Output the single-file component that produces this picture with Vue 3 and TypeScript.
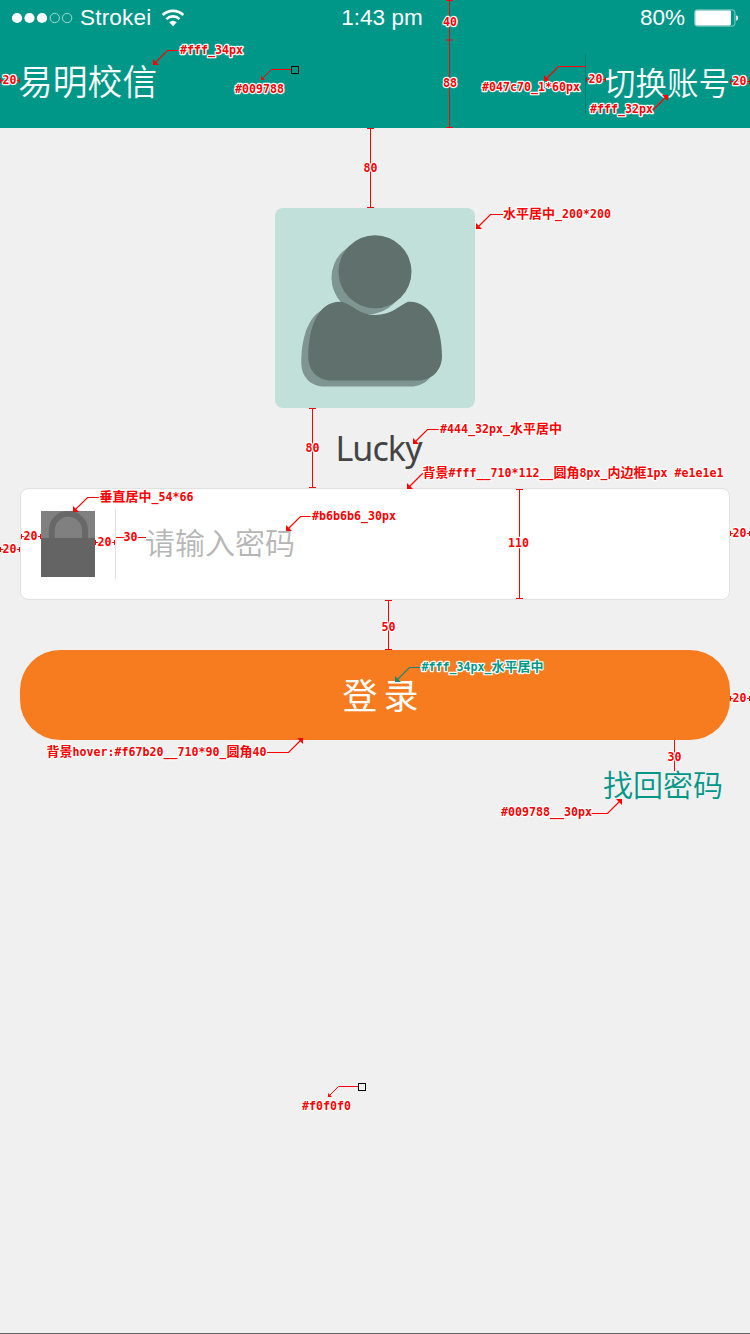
<script setup lang="ts">
interface Note {
  x: number
  y: number
  text: string
  teal?: boolean
}
interface Leader {
  points: string
  tip: [number, number]
  dir: 'down' | 'up'
  size?: number
  teal?: boolean
}

const notes: Note[] = [
  { x: 180, y: 54, text: '#fff_34px' },
  { x: 235, y: 93, text: '#009788' },
  { x: 443, y: 26, text: '40' },
  { x: 443, y: 87, text: '88' },
  { x: 482, y: 91, text: '#047c70_1*60px' },
  { x: 590, y: 113, text: '#fff_32px' },
  { x: 2.5, y: 84, text: '20' },
  { x: 588.5, y: 83, text: '20' },
  { x: 732.5, y: 85, text: '20' },
  { x: 363.5, y: 172, text: '80' },
  { x: 503, y: 218, text: '水平居中_200*200' },
  { x: 305.5, y: 452, text: '80' },
  { x: 440, y: 433, text: '#444_32px_水平居中' },
  { x: 422.5, y: 477, text: '背景#fff__710*112__圆角8px_内边框1px #e1e1e1' },
  { x: 99.5, y: 501, text: '垂直居中_54*66' },
  { x: 312, y: 520, text: '#b6b6b6_30px' },
  { x: 23.5, y: 540, text: '20' },
  { x: 2.5, y: 553, text: '20' },
  { x: 97.5, y: 546, text: '20' },
  { x: 123.5, y: 541, text: '30' },
  { x: 508, y: 547, text: '110' },
  { x: 732.5, y: 537, text: '20' },
  { x: 381.5, y: 631, text: '50' },
  { x: 421.5, y: 671, text: '#fff_34px_水平居中', teal: true },
  { x: 46.5, y: 756, text: '背景hover:#f67b20__710*90_圆角40' },
  { x: 732.5, y: 702, text: '20' },
  { x: 667.5, y: 761, text: '30' },
  { x: 501, y: 816, text: '#009788__30px' },
  { x: 302, y: 1110, text: '#f0f0f0' },
]

const leaders: Leader[] = [
  { points: '180,50.5 167.5,50.5 155,63', tip: [153, 65], dir: 'down' },
  { points: '291,69.5 271.5,69.5 263,78', tip: [261, 80], dir: 'down', size: 4 },
  { points: '586,66.5 558.5,66.5 546,79', tip: [544, 81], dir: 'down' },
  { points: '653,110 666,97', tip: [668, 95], dir: 'up' },
  { points: '503,214.5 490.5,214.5 478,227', tip: [476, 229], dir: 'down' },
  { points: '440,429.5 427.5,429.5 415,442', tip: [413, 444], dir: 'down' },
  { points: '423,473.5 421.5,474.5 409,487', tip: [407, 489], dir: 'down' },
  { points: '100,497.5 87.5,497.5 75,510', tip: [73, 512], dir: 'down' },
  { points: '312,516.5 300.5,516.5 288,529', tip: [286, 531], dir: 'down' },
  { points: '421,667.5 409.5,667.5 397,680', tip: [395, 682], dir: 'down', teal: true },
  { points: '267,752.5 288.5,752.5 301,740', tip: [303, 738], dir: 'up' },
  { points: '591,813.5 607.5,813.5 620,801', tip: [622, 799], dir: 'up' },
  { points: '358,1086.5 338.5,1086.5 330,1095', tip: [328, 1097], dir: 'down', size: 4 },
]

// Vertical dimension lines, with a tick at each listed height.
const rulers = [
  { x: 449.5, ticks: [0.5, 40, 127.5] },
  { x: 370.5, ticks: [128.5, 207.5] },
  { x: 312.5, ticks: [408.5, 487.5] },
  { x: 519.5, ticks: [489.5, 598.5] },
  { x: 388.5, ticks: [600.5, 649.5] },
]

// Horizontal gaps: left edge, right edge, height.
const gaps = [
  [0, 20, 80],
  [586, 606, 79],
  [730, 750, 81],
  [21, 41, 536],
  [0, 20, 549],
  [95, 115, 542],
  [730, 750, 533],
  [730, 750, 698],
]

const runs = (text: string) =>
  text.match(/[\u4e00-\u9fff]+|[^\u4e00-\u9fff]+/g)!.map((value) => ({
    value,
    han: /[\u4e00-\u9fff]/.test(value),
  }))

const arrow = ({ tip: [x, y], dir, size = 6 }: Leader) =>
  dir === 'down'
    ? `${x},${y} ${x},${y - size} ${x + size},${y}`
    : `${x},${y} ${x - size},${y} ${x},${y + size}`
</script>

<template>
  <div class="screen">
    <header class="header">
      <div class="status">
        <div class="carrier">
          <svg class="dots" width="62" height="12" viewBox="0 0 62 12">
            <circle cx="6" cy="6" r="5.1" fill="#fff" />
            <circle cx="18.5" cy="6" r="5.1" fill="#fff" />
            <circle cx="31" cy="6" r="5.1" fill="#fff" />
            <circle cx="43.8" cy="6" r="4.7" fill="none" stroke="#b5ded9" stroke-width=".9" />
            <circle cx="56.1" cy="6" r="4.7" fill="none" stroke="#b5ded9" stroke-width=".9" />
          </svg>
          <span class="carrier-name">Strokei</span>
          <svg width="24" height="18" viewBox="0 0 24 18" fill="none" stroke="#fff">
            <path d="M1.7 6.1A14.8 14.8 0 0 1 22.3 6.1" stroke-width="2.8" />
            <path d="M5.4 10.1A9.4 9.4 0 0 1 18.6 10.1" stroke-width="2.6" />
            <path d="M12 17.2L8.2 13.3Q12 10.3 15.8 13.3Z" fill="#fff" stroke="none" />
          </svg>
        </div>
        <span class="time">1:43 pm</span>
        <div class="power">
          <span>80%</span>
          <svg width="45" height="18" viewBox="0 0 45 18">
            <rect x=".7" y=".9" width="40.2" height="16.2" rx="2.4" fill="none" stroke="#8fcec7" />
            <rect x="1.3" y="1.5" width="35.7" height="15" rx="1.4" fill="#fff" />
            <path d="M42.2 6.2Q44.2 6.7 44.2 9T42.2 11.8Z" fill="#fff" />
          </svg>
        </div>
      </div>
      <nav class="bar">
        <h1 class="title">易明校信</h1>
        <a class="switch">切换账号</a>
      </nav>
    </header>

    <main class="content">
      <div class="avatar">
        <svg width="200" height="200" viewBox="0 0 200 200">
          <defs>
            <g id="person">
              <circle cx="100" cy="63.7" r="36.5" />
              <path
                d="M67 93.8C79 98 85 107 100 107C116 107 124 98 133 93.8C156 92 167 120 167 148C167 163 156 172.5 143 172.5H56C43 172.5 33.3 163 33.3 149C33.3 118 44 92 67 93.8Z"
              />
            </g>
          </defs>
          <use href="#person" x="-7" y="6" fill="#7f9591" />
          <use href="#person" fill="#60706c" />
        </svg>
      </div>
      <p class="name">Lucky</p>

      <div class="field">
        <svg width="54" height="66" viewBox="0 0 54 66">
          <rect width="54" height="66" fill="#808080" />
          <path d="M10.8 27V19.4A16.6 16.6 0 0 1 44 19.4V27" fill="none" stroke="#686868" stroke-width="6" />
          <rect y="27" width="54" height="39" fill="#646464" />
        </svg>
        <i class="divider"></i>
        <span class="placeholder">请输入密码</span>
      </div>

      <button class="login" type="button">登录</button>
      <a class="forgot">找回密码</a>
    </main>

    <svg class="notes" width="750" height="1334" viewBox="0 0 750 1334">
      <g v-for="r in rulers" :key="r.x" class="line">
        <path :d="`M${r.x} ${r.ticks[0]}V${r.ticks[r.ticks.length - 1]}`" />
        <path v-for="t in r.ticks" :key="t" :d="`M${r.x - 3.5} ${t}h7`" />
      </g>
      <path class="line" d="M674.5 740V771M116 537.5H146" />
      <g v-for="(g, i) in gaps" :key="i" class="line">
        <path
          :d="`M${g[0] + 0.5} ${g[2] - 2}v5M${g[1] - 0.5} ${g[2] - 2}v5M${g[0]} ${g[2] + 0.5}H${g[1]}`"
        />
      </g>
      <g v-for="(l, i) in leaders" :key="i" :class="['leader', { teal: l.teal, fine: l.size }]">
        <polyline :points="l.points" />
        <polygon :points="arrow(l)" />
      </g>
      <rect class="sample" x="291.5" y="66.5" width="7" height="7" />
      <rect class="sample" x="358.5" y="1083.5" width="7" height="7" />
      <text
        v-for="(n, i) in notes"
        :key="i"
        :x="n.x"
        :y="n.y"
        :class="['note', { teal: n.teal }]"
      ><tspan v-for="(r, j) in runs(n.text)" :key="j" :class="{ han: r.han }">{{ r.value }}</tspan></text>
    </svg>
  </div>
</template>

<style>
html,
body {
  margin: 0;
  background: #f0f0f0;
}
</style>

<style scoped>
.screen {
  position: relative;
  box-sizing: border-box;
  width: 750px;
  height: 1334px;
  overflow: hidden;
  background: #f0f0f0;
  border-bottom: 1px solid #666;
  font-family: 'Noto Sans CJK SC', sans-serif;
  font-weight: 350;
}
.header {
  height: 128px;
  background: #009788;
  color: #fff;
}
.status {
  display: grid;
  grid-template-columns: 1fr auto 1fr;
  align-items: center;
  height: 36px;
  padding: 0 11px;
  font: 400 22.5px/36px 'Liberation Sans', sans-serif;
}
.carrier,
.power {
  display: flex;
  align-items: center;
}
.carrier-name {
  margin: 0 10px 0 7px;
  letter-spacing: 0.2px;
}
.time {
  padding-left: 14px;
}
.power {
  justify-content: flex-end;
  gap: 9px;
}
.bar {
  display: flex;
  align-items: center;
  justify-content: space-between;
  height: 88px;
  margin-top: 4px;
  padding: 0 20px 0 18px;
  box-sizing: border-box;
}
.title {
  margin: 0;
  padding-bottom: 8px;
  font-size: 34.8px;
  font-weight: 350;
  line-height: 60px;
}
.switch {
  box-sizing: border-box;
  height: 60px;
  padding-left: 18px;
  border-left: 1px solid #047c70;
  font-size: 31.5px;
  line-height: 54px;
}
.content {
  display: flex;
  flex-direction: column;
  align-items: center;
  padding: 80px 20px 0;
}
.avatar {
  width: 200px;
  height: 200px;
  border-radius: 8px;
  background: #c1e0da;
  overflow: hidden;
}
.avatar svg {
  display: block;
}
.name {
  height: 80px;
  margin: 0;
  padding-left: 7px;
  color: #444;
  font: 400 34px/80px 'Noto Sans', sans-serif;
  letter-spacing: -0.9px;
}
.field {
  display: flex;
  align-items: center;
  align-self: stretch;
  box-sizing: border-box;
  height: 112px;
  padding-left: 20px;
  border: 1px solid #e1e1e1;
  border-radius: 8px;
  background: #fff;
}
.divider {
  width: 1px;
  height: 70px;
  margin: 0 29px 0 20px;
  background: #e1e1e1;
}
.placeholder {
  padding-bottom: 6px;
  color: #b6b6b6;
  font-size: 30px;
  line-height: 44px;
}
.login {
  align-self: stretch;
  height: 90px;
  margin-top: 50px;
  padding: 0 0 2px 17px;
  border: 0;
  border-radius: 40px;
  background: #f77c20;
  color: #fff;
  font: 400 35px/88px 'Noto Sans CJK SC', sans-serif;
  letter-spacing: 6px;
}
.forgot {
  align-self: flex-end;
  margin: 21px 7px 0 0;
  color: #009788;
  font-size: 30px;
  line-height: 44px;
}
.notes {
  position: absolute;
  inset: 0;
  pointer-events: none;
}
.line {
  fill: none;
  stroke: #f00;
  stroke-width: 1;
}
.leader {
  fill: #f00;
  stroke: none;
}
.leader polyline {
  fill: none;
  stroke: #f00;
  stroke-width: 1.2;
}
.leader.fine polyline {
  stroke-width: 1;
}
.leader.teal {
  fill: #218471;
}
.leader.teal polyline {
  stroke: #218471;
}
.sample {
  fill: none;
  stroke: #000;
}
.note {
  fill: #f00;
  stroke: #fff;
  stroke-width: 2.4px;
  stroke-linejoin: round;
  paint-order: stroke;
  font-family: 'DejaVu Sans Mono', monospace;
  font-size: 11.63px;
  font-weight: 700;
  white-space: pre;
}
.note.teal {
  fill: #009788;
}
.han {
  font-family: 'Noto Sans CJK SC', sans-serif;
  font-size: 13px;
}
</style>
